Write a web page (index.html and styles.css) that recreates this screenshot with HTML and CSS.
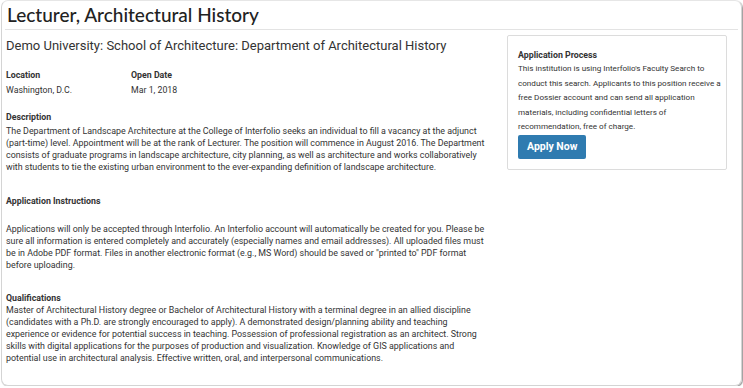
FILE: index.html
```html
<!DOCTYPE html>
<html>
<head>
<meta charset="utf-8">
<link rel="stylesheet" href="styles.css">
</head>
<body>
<div class="frame">
  <h1 class="title">Lecturer, Architectural History</h1>
  <div class="content">
    <div class="main">
      <h2 class="org">Demo University: School of Architecture: Department of Architectural History</h2>
      <div class="facts">
        <div class="fact loc">
          <div class="label">Location</div>
          <div class="value">Washington, D.C.</div>
        </div>
        <div class="fact">
          <div class="label">Open Date</div>
          <div class="value">Mar 1, 2018</div>
        </div>
      </div>
      <div class="section desc">
        <div class="label">Description</div>
        <p class="text">The Department of Landscape Architecture at the College of Interfolio seeks an individual to fill a vacancy at the adjunct (part-time) level. Appointment will be at the rank of Lecturer. The position will commence in August 2016. The Department consists of graduate programs in landscape architecture, city planning, as well as architecture and works collaboratively with students to tie the existing urban environment to the ever-expanding definition of landscape architecture.</p>
      </div>
      <div class="section instr">
        <div class="label">Application Instructions</div>
        <p class="text gap">Applications will only be accepted through Interfolio. An Interfolio account will automatically be created for you. Please be sure all information is entered completely and accurately (especially names and email addresses). All uploaded files must be in Adobe PDF format. Files in another electronic format (e.g., MS Word) should be saved or "printed to" PDF format before uploading.</p>
      </div>
      <div class="section qual">
        <div class="label">Qualifications</div>
        <p class="text tight">Master of Architectural History degree or Bachelor of Architectural History with a terminal degree in an allied discipline (candidates with a Ph.D. are strongly encouraged to apply). A demonstrated design/planning ability and teaching experience or evidence for potential success in teaching. Possession of professional registration as an architect. Strong skills with digital applications for the purposes of production and visualization. Knowledge of GIS applications and potential use in architectural analysis. Effective written, oral, and interpersonal communications.</p>
      </div>
    </div>
    <aside class="side">
      <div class="side-title">Application Process</div>
      <p class="side-text">This institution is using Interfolio's Faculty Search to conduct this search. Applicants to this position receive a free Dossier account and can send all application materials, including confidential letters of recommendation, free of charge.</p>
      <a class="btn">Apply Now</a>
    </aside>
  </div>
</div>
</body>
</html>
```

FILE: styles.css
```css
* { box-sizing: border-box; }
html, body { margin: 0; padding: 0; background: #fff; }
body { font-family: Roboto, "Liberation Sans", sans-serif; color: #333; }

.frame {
  margin: 0 1px;
  height: 386px;
  border: 1px solid #d4d4d4;
  border-top-color: #e6e6e6;
  border-radius: 7px;
  box-shadow: 1px 1px 1px #9a9a9a;
  padding: 0 3px;
  overflow: hidden;
}

.title {
  margin: 0;
  padding: 4px 2px 4px;
  font-family: Lato, "Open Sans", sans-serif;
  font-weight: 500;
  font-size: 19px;
  line-height: 20px;
  color: #222;
  border-bottom: 1px solid #e3e3e3;
}

.content {
  display: flex;
  padding: 0 1px;
}

.main {
  flex: 0 0 485px;
}

.org {
  margin: 0;
  padding-top: 7px;
  font-weight: 400;
  font-size: 13px;
  line-height: 18px;
  color: #333;
  white-space: nowrap;
}

.facts {
  display: flex;
  margin-top: 14px;
}
.fact.loc { width: 125px; }

.label {
  font-weight: 700;
  font-size: 8.8px;
  line-height: 12px;
  color: #333;
}
.value {
  font-size: 8.8px;
  line-height: 12px;
  margin-top: 3px;
}

.section { width: 480px; }
.section.desc { margin-top: 15px; }
.section.instr { margin-top: 22px; }
.section.qual { margin-top: 21px; }

.text {
  margin: 2px 0 0;
  font-size: 8.9px;
  line-height: 12px;
  color: #333;
}
.text.gap { margin-top: 16px; }
.text.tight { margin-top: 0; }

.side {
  flex: 0 0 220px;
  margin-left: 16px;
  margin-top: 5px;
  align-self: flex-start;
  border: 1px solid #dcdcdc;
  border-radius: 2px;
  padding: 13px 5px 10px 10px;
}
.side-title {
  font-weight: 700;
  font-size: 8.8px;
  line-height: 12px;
  color: #333;
}
.side-text {
  margin: 0 0 1px;
  font-size: 8.1px;
  line-height: 14.6px;
  color: #333;
}
.btn {
  display: inline-block;
  background: #2f7bb0;
  color: #fff;
  font-weight: 700;
  font-size: 10.5px;
  line-height: 24px;
  padding: 0 9px;
  border-radius: 2px;
}
```
